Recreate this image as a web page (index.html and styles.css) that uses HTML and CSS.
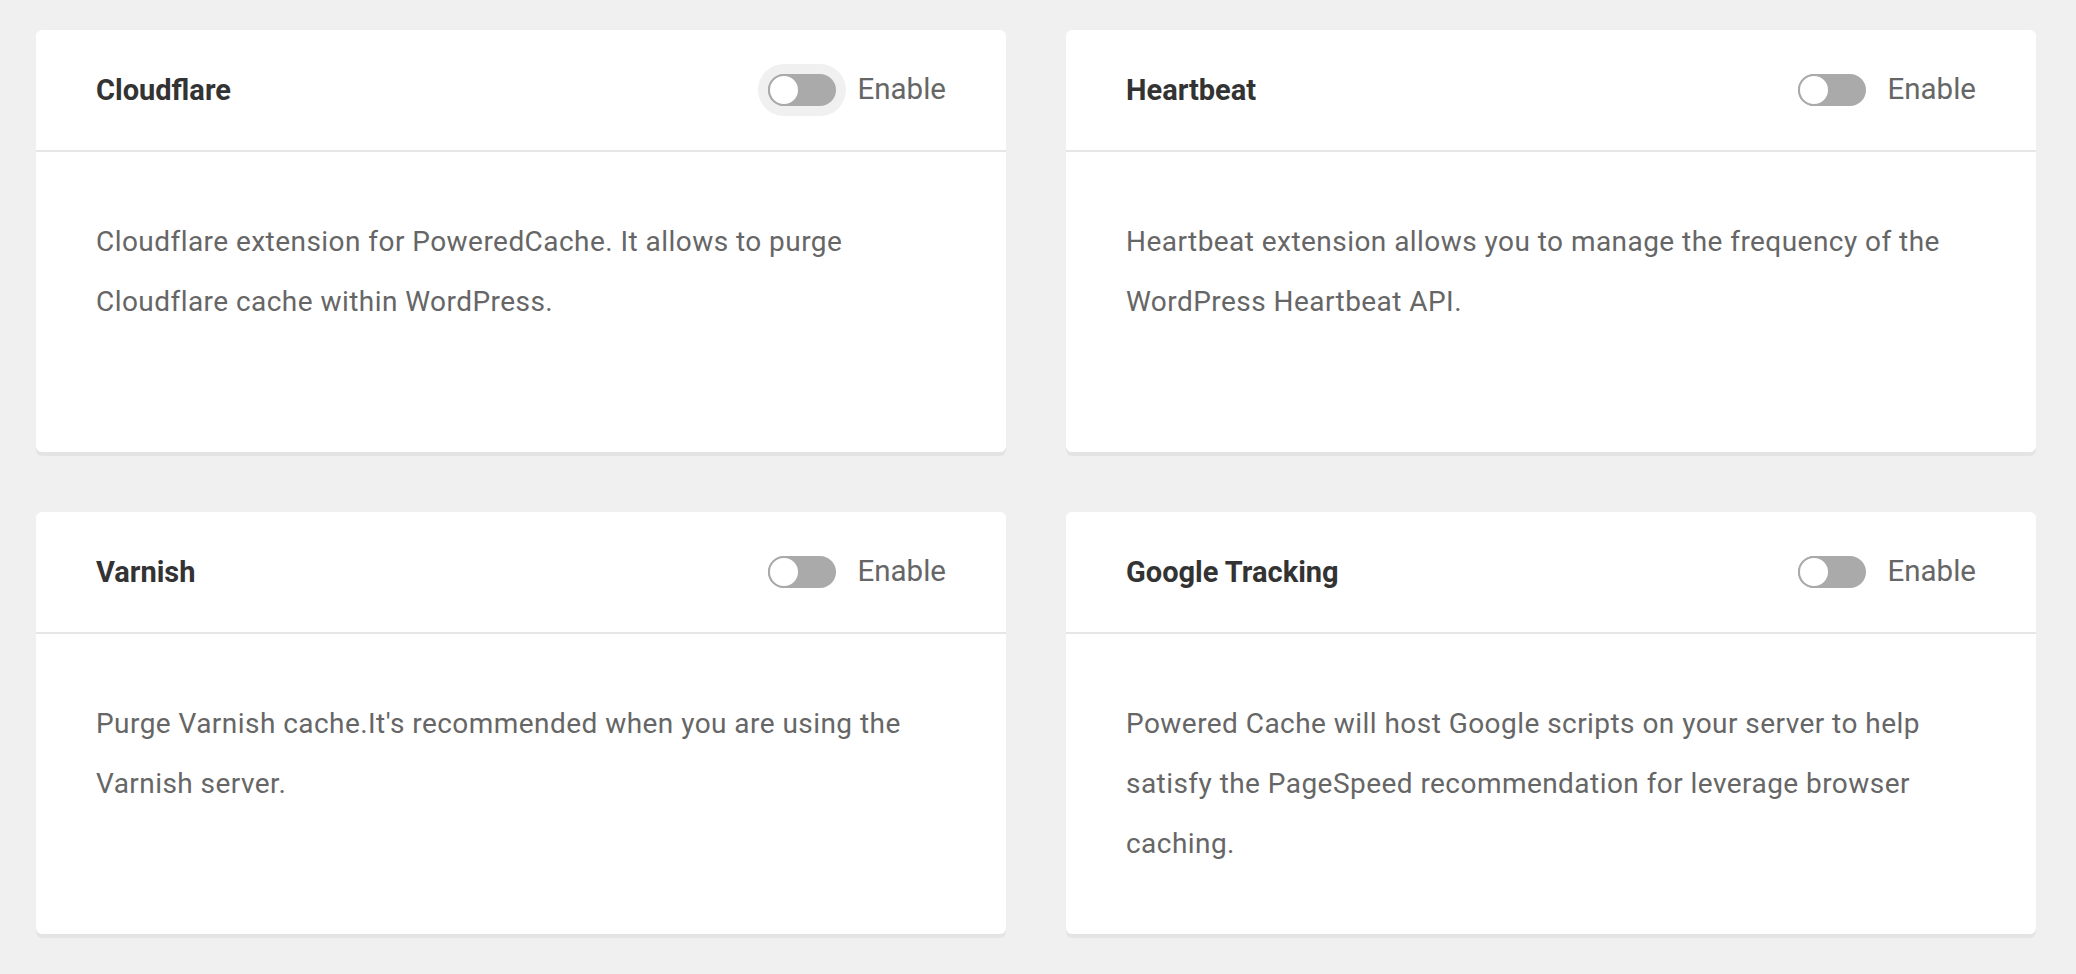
FILE: index.html
```html
<!DOCTYPE html>
<html lang="en">
<head>
<meta charset="utf-8">
<title>Extensions</title>
<link rel="stylesheet" href="styles.css">
</head>
<body>
<main class="grid">
  <section class="card">
    <header class="card-head">
      <h2 class="card-title">Cloudflare</h2>
      <label class="switch">
        <span class="track is-focused"><span class="knob"></span></span>
        <span class="switch-label">Enable</span>
      </label>
    </header>
    <div class="card-body">
      <p>Cloudflare extension for PoweredCache. It allows to purge Cloudflare cache within WordPress.</p>
    </div>
  </section>

  <section class="card">
    <header class="card-head">
      <h2 class="card-title">Heartbeat</h2>
      <label class="switch">
        <span class="track"><span class="knob"></span></span>
        <span class="switch-label">Enable</span>
      </label>
    </header>
    <div class="card-body">
      <p>Heartbeat extension allows you to manage the frequency of the WordPress Heartbeat API.</p>
    </div>
  </section>

  <section class="card">
    <header class="card-head">
      <h2 class="card-title">Varnish</h2>
      <label class="switch">
        <span class="track"><span class="knob"></span></span>
        <span class="switch-label">Enable</span>
      </label>
    </header>
    <div class="card-body">
      <p>Purge Varnish cache.It's recommended when you are using the Varnish server.</p>
    </div>
  </section>

  <section class="card">
    <header class="card-head">
      <h2 class="card-title">Google Tracking</h2>
      <label class="switch">
        <span class="track"><span class="knob"></span></span>
        <span class="switch-label">Enable</span>
      </label>
    </header>
    <div class="card-body">
      <p>Powered Cache will host Google scripts on your server to help satisfy the PageSpeed recommendation for leverage browser caching.</p>
    </div>
  </section>
</main>
</body>
</html>
```

FILE: styles.css
```css
* {
  box-sizing: border-box;
}

html, body {
  margin: 0;
  padding: 0;
  background: #f0f0f0;
}

body {
  font-family: Roboto, "Liberation Sans", Arial, sans-serif;
  color: #666;
}

.grid {
  display: grid;
  grid-template-columns: 970px 970px;
  column-gap: 60px;
  row-gap: 60px;
  padding: 30px 40px 30px 36px;
}

.card {
  background: #fff;
  border-radius: 6px;
  box-shadow: 0 4px 0 #e4e4e4;
  display: flex;
  flex-direction: column;
}

.card-head {
  height: 122px;
  display: flex;
  align-items: center;
  justify-content: space-between;
  padding: 0 60px;
  border-bottom: 2px solid #e6e6e6;
}

.card-title {
  margin: 0;
  font-size: 29px;
  font-weight: 700;
  color: #333;
  line-height: 1;
}

.switch {
  display: flex;
  align-items: center;
  gap: 22px;
}

.track {
  width: 68px;
  height: 32px;
  border-radius: 16px;
  background: #aaa;
  display: flex;
  align-items: center;
}

.track.is-focused {
  box-shadow: 0 0 0 10px #f0f0f0;
}

.knob {
  width: 32px;
  height: 32px;
  border-radius: 50%;
  background: #fff;
  border: 2px solid #aaa;
}

.switch-label {
  font-size: 29.5px;
  color: #666;
  line-height: 1;
}

.card-body {
  flex: 1;
  min-height: 300px;
  padding: 60px;
}

.card-body p {
  margin: 0;
  font-size: 28px;
  letter-spacing: 0.45px;
  line-height: 60px;
  color: #666;
}
```
